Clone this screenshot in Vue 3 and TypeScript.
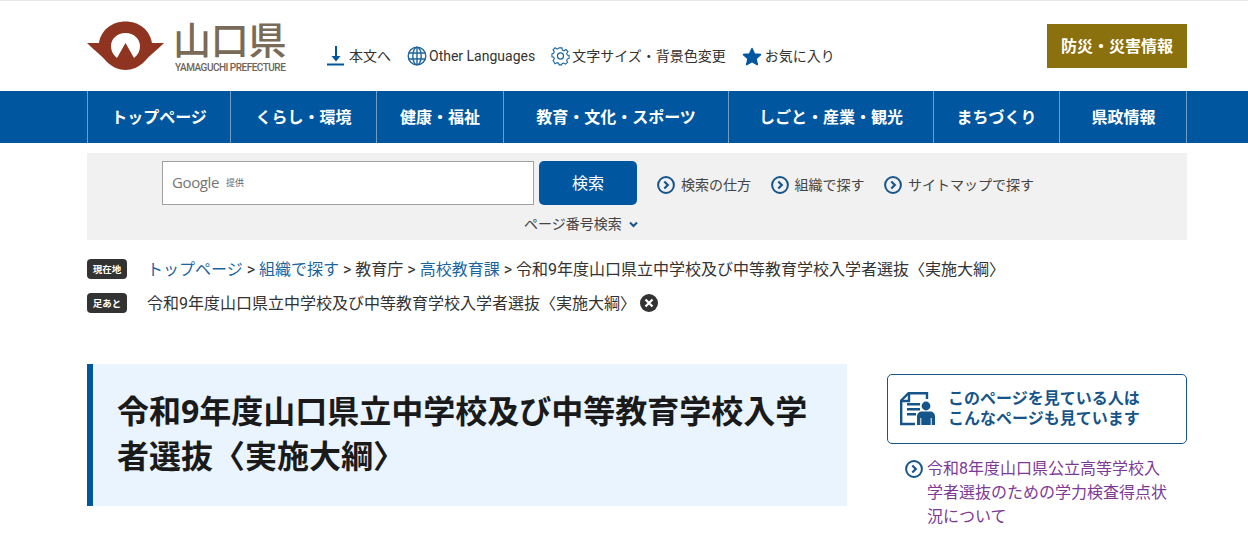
<script setup lang="ts">
const nav: string[] = ['トップページ', 'くらし・環境', '健康・福祉', '教育・文化・スポーツ', 'しごと・産業・観光', 'まちづくり', '県政情報']
const searchLinks: string[] = ['検索の仕方', '組織で探す', 'サイトマップで探す']
</script>

<template>
  <div class="page">
    <header class="header">
      <div class="logo">
        <svg class="mark" width="78" height="50" viewBox="0 0 78 50">
          <path fill="#8f3420" fill-rule="evenodd" d="M0 22H12C14 9 25 .5 38.500 .5S63 9 65 22H77C70 29 63 34 57 41 52 46 45 49 38.500 49S25 46 20 41C14 34 7 29 0 22ZM30 37C26 34 24 30 24 25 24 18 30 12 38.500 12S53 18 53 25C53 30 51 34 47 37L38.500 22Z"/>
        </svg>
        <div class="logo-text">
          <div class="logo-ja">山口県</div>
          <div class="logo-en">YAMAGUCHI PREFECTURE</div>
        </div>
      </div>
      <nav class="tools">
        <a class="tool t1">
          <svg width="18" height="20" viewBox="0 0 18 20"><path fill="#00579f" d="M8 0h2v10h3.500L9 15.500 4.500 10H8ZM0 17.500h17V19.500H0Z"/></svg>
          本文へ
        </a>
        <a class="tool t2">
          <svg width="20" height="20" viewBox="0 0 20 20" fill="none" stroke="#1c659f" stroke-width="1.400"><circle cx="10" cy="10" r="8.800"/><ellipse cx="10" cy="10" rx="4.200" ry="8.800"/><path d="M10 1v18M1.500 7h17M1.500 13h17"/></svg>
          Other Languages
        </a>
        <a class="tool t3">
          <svg width="19" height="20" viewBox="0 0 20 20" fill="none" stroke="#1c659f" stroke-width="1.300"><path d="M8.300 1h3.400l.5 2.700 1.800.8L16.300 3l2.400 2.400-1.500 2.300.8 1.800 2 .5v3.400l-2 .5-.8 1.800 1.100 2-2.400 2.400-2.300-1.300-1.800.7-.5 1.500H8.300l-.5-2-1.800-.7-2.300 1.300L1.300 15.900l1.500-2.100-.8-1.800-2-.5V8l2-.5.800-1.800L1.300 3.300 3.700 1l2.300 1.500 1.800-.8Z" transform="translate(1 .5) scale(.9)"/><circle cx="10" cy="10" r="3.200"/></svg>
          文字サイズ・背景色変更
        </a>
        <a class="tool t4">
          <svg width="20" height="19" viewBox="0 0 20 19"><path fill="#00579f" stroke="#00579f" stroke-width="1.500" stroke-linejoin="round" d="M10 1.500l2.500 5.500 6 .6-4.500 4 1.300 6L10 14.500 4.700 17.600l1.300-6-4.500-4 6-.6Z"/></svg>
          お気に入り
        </a>
      </nav>
      <a class="disaster">防災・災害情報</a>
    </header>

    <nav class="gnav">
      <div class="gnav-inner">
        <a v-for="n in nav" :key="n" class="gnav-item">{{ n }}</a>
      </div>
    </nav>

    <section class="search">
      <div class="search-row">
        <div class="search-box"><span class="g">Google</span><span class="g-sub">提供</span></div>
        <button class="search-btn">検索</button>
        <div class="search-links">
          <a v-for="l in searchLinks" :key="l" class="search-link">
            <svg class="arrow" width="18" height="18" viewBox="0 0 18 18" fill="none" stroke="#15558a"><circle cx="9" cy="9" r="7.900" stroke-width="2"/><path d="M7.300 5.500 10.800 9l-3.500 3.500" stroke-width="2.200"/></svg>
            {{ l }}
          </a>
        </div>
      </div>
      <div class="page-search">
        ページ番号検索
        <svg width="9" height="7" viewBox="0 0 9 7" fill="none" stroke="#15558a" stroke-width="2"><path d="M1 1.500 4.500 5 8 1.500"/></svg>
      </div>
    </section>

    <section class="crumbs">
      <div class="crumb-row first">
        <span class="tag">現在地</span>
        <div class="crumb-text"><a>トップページ</a> &gt; <a>組織で探す</a> &gt; 教育庁 &gt; <a>高校教育課</a> &gt; 令和9年度山口県立中学校及び中等教育学校入学者選抜〈実施大綱〉</div>
      </div>
      <div class="crumb-row second">
        <span class="tag">足あと</span>
        <div class="crumb-text trail">令和9年度山口県立中学校及び中等教育学校入学者選抜〈実施大綱〉</div>
        <svg class="close" width="18" height="18" viewBox="0 0 18 18"><circle cx="9" cy="9" r="9" fill="#333"/><path d="M5.500 5.500l7 7M12.500 5.500l-7 7" stroke="#fff" stroke-width="2.200"/></svg>
      </div>
    </section>

    <main class="content">
      <h1 class="title">令和9年度山口県立中学校及び中等教育学校入学者選抜〈実施大綱〉</h1>
      <aside class="side">
        <div class="side-head">
          <svg width="36" height="34" viewBox="0 0 36 34">
            <path fill="none" stroke="#15558a" stroke-width="2.400" d="M27 7V1.200H8.500L1.200 8.500V32H15"/>
            <path fill="none" stroke="#15558a" stroke-width="2.400" d="M2 9H9V2"/>
            <path fill="#15558a" d="M7 11h13v2.400H7ZM7 16h13v2.400H7ZM7 21h9v2.400H7Z"/>
            <circle cx="26" cy="14" r="4.400" fill="#15558a"/>
            <path fill="#15558a" d="M17 33V24.500c0-3 2-5 5-5h8c3 0 5 2 5 5V33Z"/>
            <path stroke="#fff" stroke-width="1" d="M20.800 26v7M31.200 26v7"/>
          </svg>
          <div class="side-title">このページを見ている人は<br>こんなページも見ています</div>
        </div>
        <a class="side-link">
          <svg class="side-arrow" width="18" height="18" viewBox="0 0 18 18" fill="none" stroke="#15558a"><circle cx="9" cy="9" r="7.900" stroke-width="2"/><path d="M7.300 5.500 10.800 9l-3.500 3.500" stroke-width="2.200"/></svg>
          <span>令和8年度山口県公立高等学校入学者選抜のための学力検査得点状況について</span>
        </a>
      </aside>
    </main>
  </div>
</template>

<style>
html, body { margin: 0; background: #fff; overflow: hidden; }
</style>

<style scoped>
.page {
  width: 1248px;
  height: 534px;
  overflow: hidden;
  border-top: 1px solid #e6e6e6;
  box-sizing: border-box;
  font-family: Roboto, "Noto Sans CJK JP", sans-serif;
  color: #333;
  font-size: 14px;
}
a { color: inherit; text-decoration: none; }
.header {
  height: 90px;
  padding: 0 61px 0 87px;
  display: flex;
  align-items: flex-start;
}
.logo { display: flex; width: 240px; padding-top: 20px; gap: 8px; }
.mark { flex: none; }
.logo-text { width: 112px; display: flex; flex-direction: column; align-items: flex-start; }
.logo-ja {
  font-size: 38px;
  line-height: 40px;
  height: 40px;
  color: #7a6a58;
  white-space: nowrap;
  font-weight: 500;
  letter-spacing: -.3px;
}
.logo-en {
  font-size: 10px;
  font-weight: 500;
  line-height: 12px;
  margin-top: 1px;
  margin-left: 2px;
  color: #6f6355;
  white-space: nowrap;
  letter-spacing: -.5px;
}
.tools { display: flex; align-items: center; padding-top: 44px; }
.tool { display: flex; align-items: center; gap: 2px; line-height: 22px; white-space: nowrap; }
.tool svg { flex: none; }
.t1 { margin-left: 0; gap: 4px; }
.t2 { margin-left: 16px; }
.t3 { margin-left: 16px; }
.t4 { margin-left: 16px; gap: 3px; }
.disaster {
  margin-left: auto;
  margin-top: 23px;
  width: 140px;
  height: 44px;
  background: #8b710d;
  color: #fff;
  font-weight: 700;
  font-size: 16px;
  display: flex;
  align-items: center;
  justify-content: center;
  padding-bottom: 2px;
  box-sizing: border-box;
}
.gnav { height: 52px; background: #00579f; }
.gnav-inner {
  margin-left: 87px;
  width: 1100px;
  height: 52px;
  display: grid;
  grid-template-columns: 143px 146px 127px 225px 205px 126px 128px;
  border-right: 1px solid #6f9dc5;
  box-sizing: border-box;
}
.gnav-item {
  border-left: 1px solid #6f9dc5;
  color: #fff;
  font-weight: 700;
  font-size: 16px;
  display: flex;
  align-items: center;
  justify-content: center;
  padding-bottom: 3px;
  box-sizing: border-box;
}
.search {
  margin: 10px 61px 0 87px;
  height: 87px;
  background: #f1f1f1;
  box-sizing: border-box;
  padding-top: 8px;
}
.search-row { display: flex; align-items: center; padding-left: 75px; height: 44px; }
.search-box {
  width: 372px;
  height: 44px;
  box-sizing: border-box;
  border: 1px solid #a0a0a0;
  background: #fff;
  display: flex;
  align-items: center;
  padding: 0 0 2px 9px;
  gap: 7px;
}
.g { font-family: "Open Sans", sans-serif; font-size: 15px; color: #757575; letter-spacing: -.4px; }
.g-sub { font-size: 9px; color: #666; }
.search-btn {
  margin-left: 5px;
  width: 98px;
  height: 44px;
  border: 0;
  border-radius: 5px;
  background: #00579f;
  color: #fff;
  font-family: inherit;
  font-size: 16px;
  padding: 0 0 3px;
}
.search-links { display: flex; margin-left: 20px; gap: 19.500px; padding-top: 3px; }
.search-link { display: flex; align-items: center; gap: 6px; font-size: 14px; line-height: 20px; color: #444; white-space: nowrap; }
.page-search {
  margin-top: 8px;
  padding-left: 437px;
  display: flex;
  align-items: center;
  gap: 7px;
  font-size: 14px;
  line-height: 22px;
  color: #444;
}
.crumbs { margin: 0 61px 0 87px; padding-top: 17px; height: 124px; box-sizing: border-box; }
.crumb-row { display: flex; align-items: center; height: 24px; }
.second { margin-top: 10px; }
.tag {
  flex: none;
  width: 40px;
  height: 20px;
  border-radius: 4px;
  background: #333;
  color: #fff;
  font-size: 9.500px;
  font-weight: 700;
  display: flex;
  align-items: center;
  justify-content: center;
}
.crumb-text { margin-left: 20px; padding-bottom: 2px; font-size: 16px; color: #333; white-space: nowrap; }
.crumb-text a { color: #1a659f; }
.close { margin-left: 4px; }
.content { margin: 0 61px 0 87px; display: flex; justify-content: space-between; align-items: flex-start; }
.title {
  margin: 0;
  width: 760px;
  box-sizing: border-box;
  min-height: 142px;
  border-left: 6px solid #00579f;
  background: #e9f4fe;
  padding: 24px 30px 24px 24px;
  font-family: "Noto Sans", "Noto Sans CJK JP", sans-serif;
  font-size: 32px;
  line-height: 45px;
  font-weight: 700;
  color: #1a1a1a;
}
.side { width: 300px; margin-top: 10px; }
.side-head {
  height: 70px;
  box-sizing: border-box;
  border: 1px solid #15558a;
  border-radius: 5px;
  display: flex;
  align-items: center;
  padding-left: 12px;
  gap: 12px;
}
.side-title { color: #15558a; font-weight: 700; font-size: 16px; line-height: 20px; }
.side-link { display: flex; margin-top: 13px; padding: 0 17px 0 18px; gap: 4px; color: #7c3a96; font-size: 16px; line-height: 24px; }
.side-arrow { flex: none; margin-top: 3px; }
</style>
